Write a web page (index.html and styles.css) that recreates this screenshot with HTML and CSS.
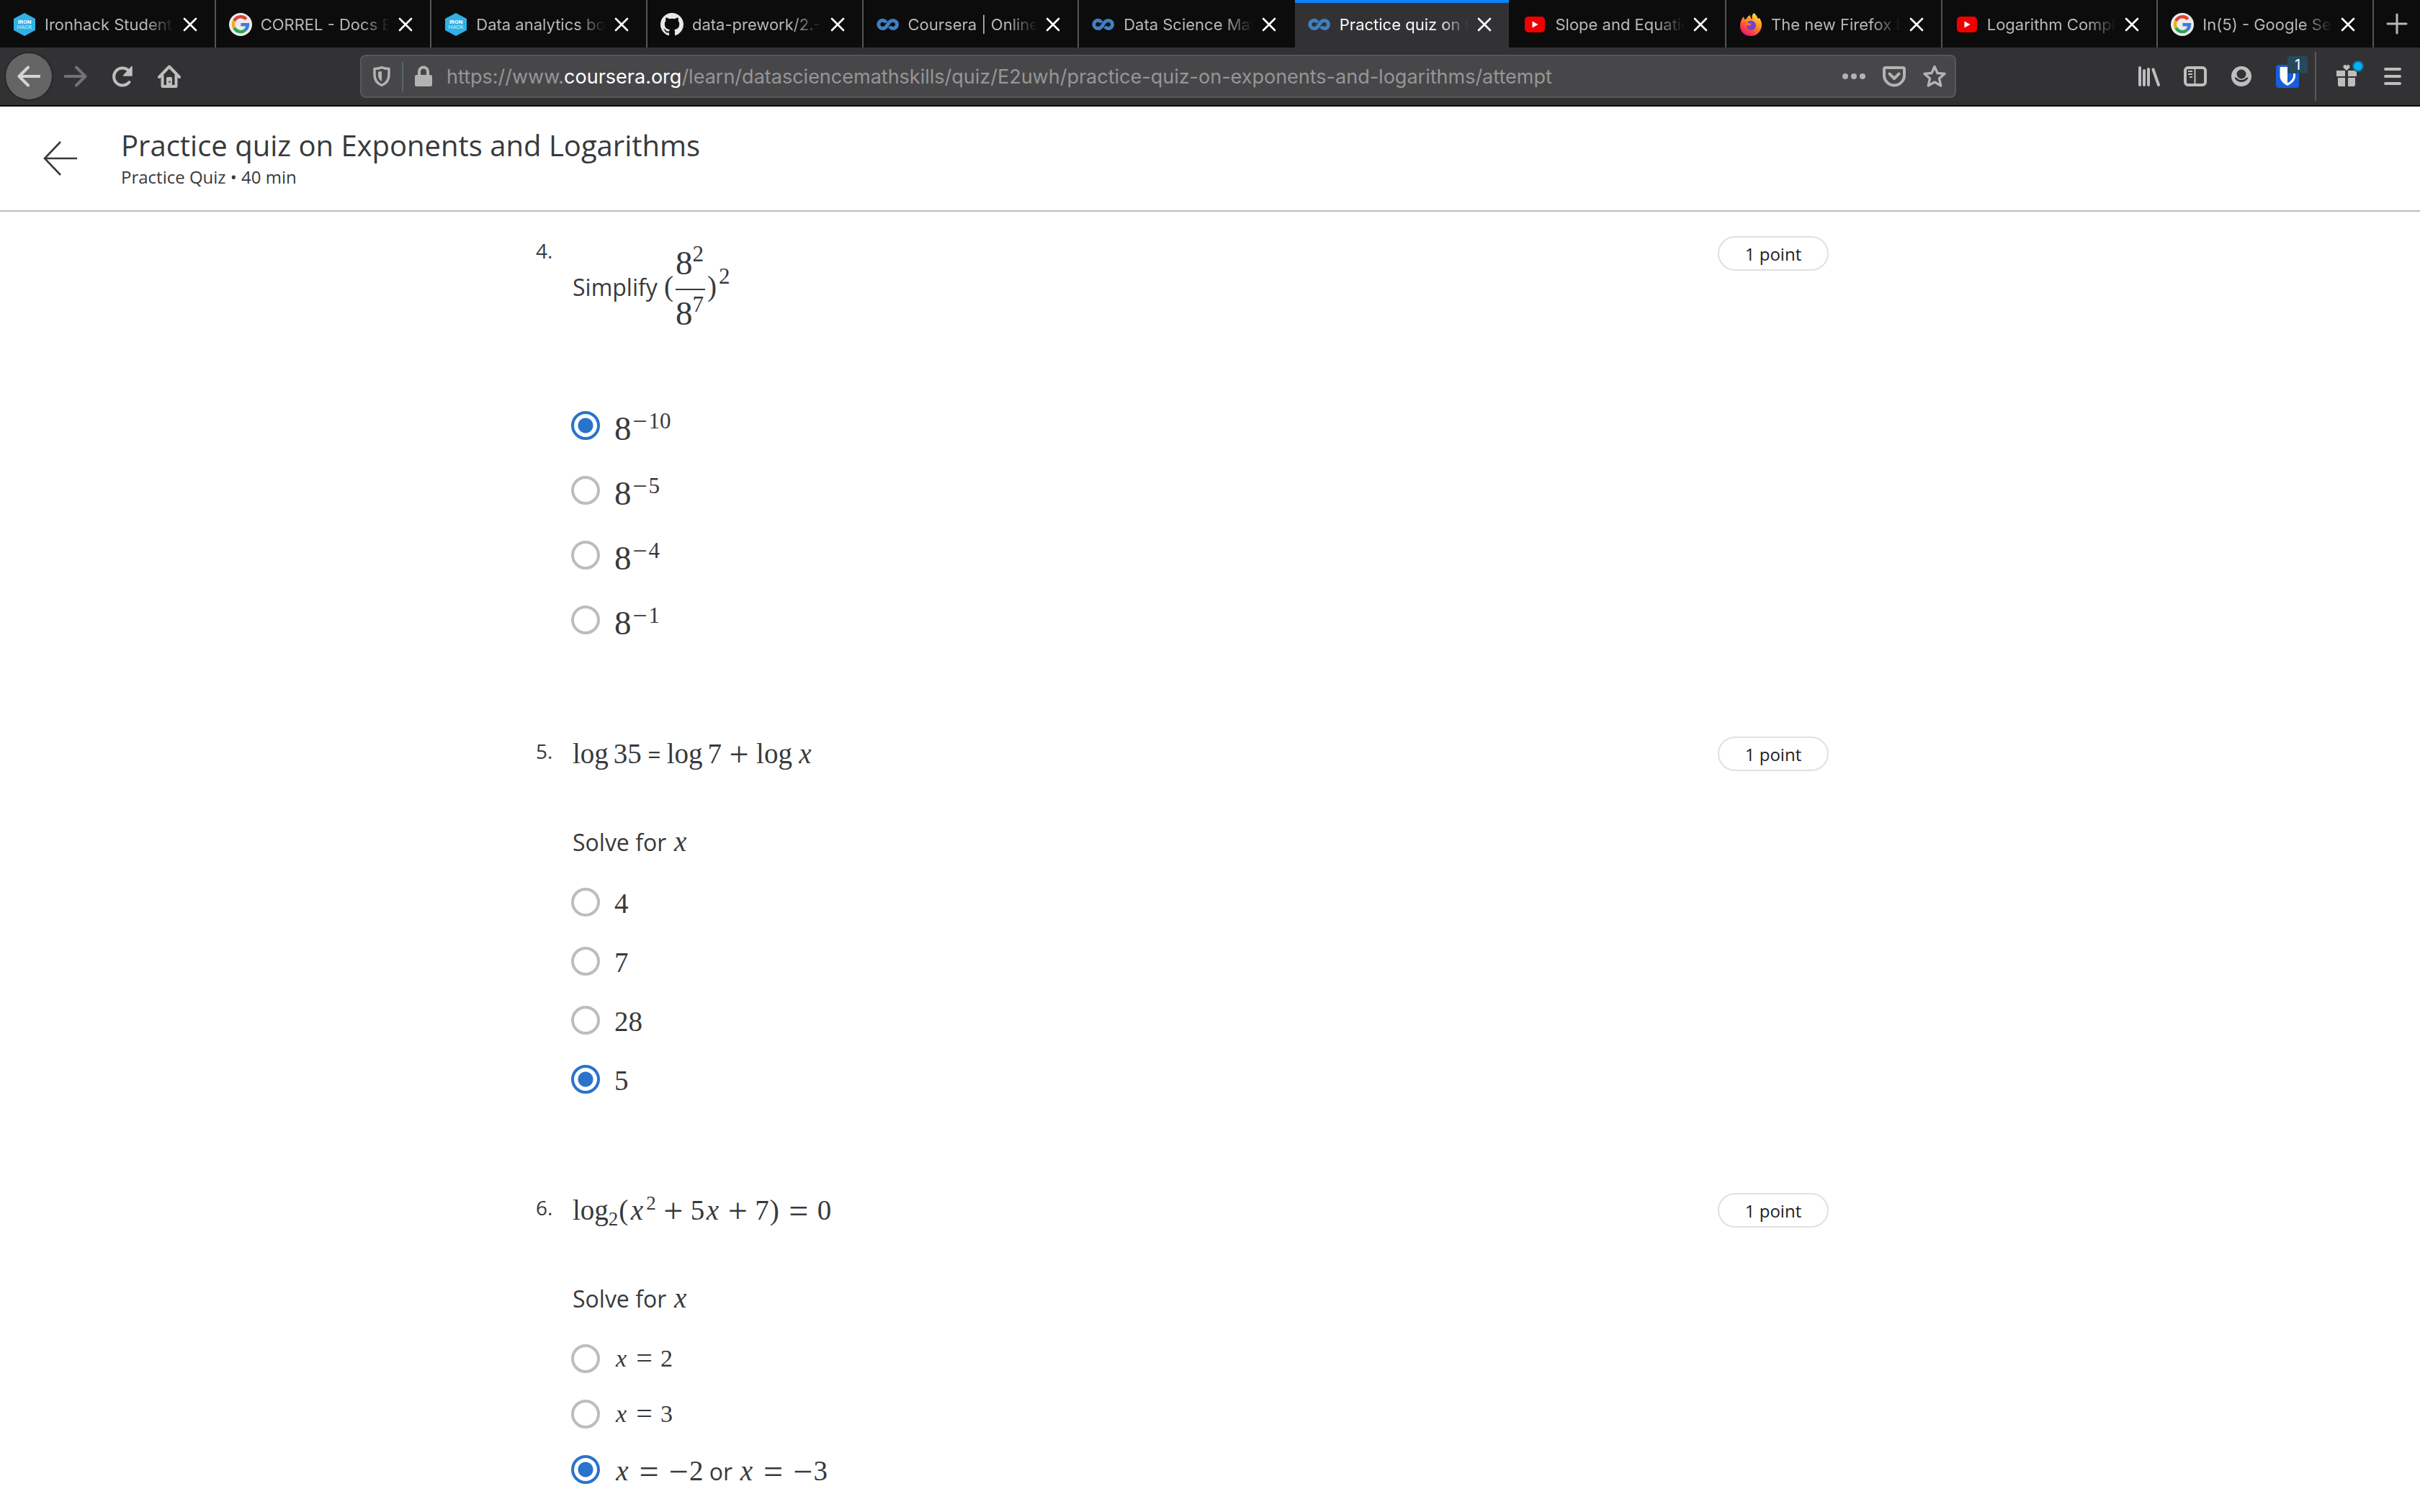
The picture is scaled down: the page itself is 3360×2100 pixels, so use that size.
FILE: index.html
```html
<!DOCTYPE html>
<html lang="en">
<head>
<meta charset="utf-8">
<title>Practice quiz on Exponents and Logarithms</title>
<link rel="stylesheet" href="styles.css">
</head>
<body>
<svg class="defs" aria-hidden="true">
  <symbol id="close" viewBox="0 0 20 20"><path d="M2 2 18 18M18 2 2 18" fill="none" stroke="currentColor" stroke-width="2.6" stroke-linecap="round"/></symbol>
  <symbol id="ironhack" viewBox="0 0 32 32"><path d="M16 0 31 8V24L16 32 1 24V8Z" fill="#2fb1e6"/><text x="16" y="15" text-anchor="middle" font-family="Roboto, sans-serif" font-size="8" font-weight="700" fill="#fff">IRON</text><text x="16" y="22" text-anchor="middle" font-family="Roboto, sans-serif" font-size="8" fill="#d5f0fb">HACK</text></symbol>
  <symbol id="google" viewBox="0 0 32 32"><circle cx="16" cy="16" r="16" fill="#ececec"/><g fill="none" stroke-width="4.4"><path d="M23.8 8.6A10 10 0 0 0 7.2 11.2" stroke="#dc4437"/><path d="M7.2 11.2A10 10 0 0 0 7.2 20.8" stroke="#eab11c"/><path d="M7.2 20.8A10 10 0 0 0 22.6 23.6" stroke="#31a350"/><path d="M22.6 23.6A10 10 0 0 0 26 16.2H16.4" stroke="#4179e0"/></g></symbol>
  <symbol id="github" viewBox="0 0 16 16"><path fill="#e8e8e8" d="M8 0C3.58 0 0 3.58 0 8c0 3.54 2.29 6.53 5.47 7.59.4.07.55-.17.55-.38 0-.19-.01-.82-.01-1.49-2.01.37-2.53-.49-2.69-.94-.09-.23-.48-.94-.82-1.13-.28-.15-.68-.52-.01-.53.63-.01 1.08.58 1.23.82.72 1.21 1.87.87 2.33.66.07-.52.28-.87.51-1.07-1.78-.2-3.64-.89-3.64-3.95 0-.87.31-1.59.82-2.15-.08-.2-.36-1.02.08-2.12 0 0 .67-.21 2.2.82.64-.18 1.32-.27 2-.27s1.36.09 2 .27c1.53-1.04 2.2-.82 2.2-.82.44 1.1.16 1.92.08 2.12.51.56.82 1.27.82 2.15 0 3.07-1.87 3.75-3.65 3.95.29.25.54.73.54 1.48 0 1.07-.01 1.93-.01 2.2 0 .21.15.46.55.38A8.01 8.01 0 0 0 16 8c0-4.42-3.58-8-8-8z"/></symbol>
  <symbol id="coursera" viewBox="0 0 32 32"><path d="M13.300 13.200A5.600 5.600 0 1 0 9 21.500C16 21.500 15 10.500 22.500 10.500A5.500 5.500 0 1 1 18.200 18.800" fill="none" stroke="#3f7fc2" stroke-width="5"/></symbol>
  <symbol id="youtube" viewBox="0 0 32 32"><rect x="2" y="5" width="28" height="22" rx="5" fill="#f00000"/><path d="M12.500 11.500V20.500L20.500 16Z" fill="#fff"/></symbol>
  <symbol id="firefox" viewBox="0 0 32 32">
    <linearGradient id="flame" x1="0.8" y1="0" x2="0.2" y2="1"><stop offset="0" stop-color="#ffe44a"/><stop offset=".45" stop-color="#ff8a1e"/><stop offset=".75" stop-color="#ff3b47"/><stop offset="1" stop-color="#d0157f"/></linearGradient>
    <path d="M20 0C24 3 25 6 26 8L28 7C31 12 32 17 30 22 27 29 22 32 16 32 7 32 1 26 1 18 1 13 3 8 6 5L7 9 10 8C11 5 13 4 15 3 15 5 16 8 18 9 17 6 17 3 20 0Z" fill="url(#flame)"/>
    <path d="M12 12C16 9 23 12 23 17 23 21 20 24 16 24 12 24 10 20 10 17L14 18 17 15 12 14Z" fill="#7542d0"/></symbol>
</svg>

<header class="browser">
  <div class="tabs" role="tablist">
    <div class="tab" role="tab"><svg class="fav"><use href="#ironhack"/></svg><span class="tab-title">Ironhack Student P</span><button class="tab-close" aria-label="Close tab"><svg><use href="#close"/></svg></button></div>
    <div class="tab" role="tab"><svg class="fav"><use href="#google"/></svg><span class="tab-title">CORREL - Docs Editors</span><button class="tab-close" aria-label="Close tab"><svg><use href="#close"/></svg></button></div>
    <div class="tab" role="tab"><svg class="fav"><use href="#ironhack"/></svg><span class="tab-title">Data analytics bootcamp</span><button class="tab-close" aria-label="Close tab"><svg><use href="#close"/></svg></button></div>
    <div class="tab" role="tab"><svg class="fav"><use href="#github"/></svg><span class="tab-title">data-prework/2.-Stat</span><button class="tab-close" aria-label="Close tab"><svg><use href="#close"/></svg></button></div>
    <div class="tab" role="tab"><svg class="fav"><use href="#coursera"/></svg><span class="tab-title">Coursera | Online C</span><button class="tab-close" aria-label="Close tab"><svg><use href="#close"/></svg></button></div>
    <div class="tab tab-before" role="tab"><svg class="fav"><use href="#coursera"/></svg><span class="tab-title">Data Science Math</span><button class="tab-close" aria-label="Close tab"><svg><use href="#close"/></svg></button></div>
    <div class="tab tab-active" role="tab" aria-selected="true"><svg class="fav"><use href="#coursera"/></svg><span class="tab-title">Practice quiz on Exponents</span><button class="tab-close" aria-label="Close tab"><svg><use href="#close"/></svg></button></div>
    <div class="tab" role="tab"><svg class="fav"><use href="#youtube"/></svg><span class="tab-title">Slope and Equation</span><button class="tab-close" aria-label="Close tab"><svg><use href="#close"/></svg></button></div>
    <div class="tab" role="tab"><svg class="fav"><use href="#firefox"/></svg><span class="tab-title">The new Firefox Look</span><button class="tab-close" aria-label="Close tab"><svg><use href="#close"/></svg></button></div>
    <div class="tab" role="tab"><svg class="fav"><use href="#youtube"/></svg><span class="tab-title">Logarithm Complete</span><button class="tab-close" aria-label="Close tab"><svg><use href="#close"/></svg></button></div>
    <div class="tab" role="tab"><svg class="fav"><use href="#google"/></svg><span class="tab-title">In(5) - Google Search</span><button class="tab-close" aria-label="Close tab"><svg><use href="#close"/></svg></button></div>
    <button class="new-tab" aria-label="New tab"><svg viewBox="0 0 32 32"><path d="M16 3V29M3 16H29" stroke="currentColor" stroke-width="3" stroke-linecap="round"/></svg></button>
  </div>

  <nav class="toolbar" aria-label="Browser">
    <div class="nav-buttons">
      <button class="tool tool-back" aria-label="Back"><svg viewBox="0 0 32 32"><path d="M31 16H3M15 3.500 2.500 16 15 28.500" fill="none" stroke="currentColor" stroke-width="4" stroke-linecap="round" stroke-linejoin="round"/></svg></button>
      <button class="tool tool-dim" aria-label="Forward"><svg viewBox="0 0 32 32"><path d="M1 16H29M17 3.500 29.500 16 17 28.500" fill="none" stroke="currentColor" stroke-width="4" stroke-linecap="round" stroke-linejoin="round"/></svg></button>
      <button class="tool" aria-label="Reload"><svg viewBox="0 0 32 32"><path d="M25.500 24A12 12 0 1 1 24.500 8" fill="none" stroke="currentColor" stroke-width="4" stroke-linecap="round"/><path d="M29 2.500V15H17.500Z" fill="currentColor" stroke="currentColor" stroke-width="1.500" stroke-linejoin="round"/></svg></button>
      <button class="tool" aria-label="Home"><svg viewBox="0 0 32 32"><path d="M2 17 16 2.500 30 17M6.500 15V30H25.500V15" fill="none" stroke="currentColor" stroke-width="4" stroke-linejoin="round" stroke-linecap="round"/><path d="M12 30V18.500Q12 17 13.500 17H18.500Q20 17 20 18.500V30Z" fill="currentColor"/><path d="M16.500 22.500V25" stroke="#323234" stroke-width="2"/></svg></button>
    </div>
    <div class="urlbar">
      <button class="url-icon" aria-label="Tracking protection"><svg viewBox="0 0 32 32"><path d="M16 3.500C12 5.500 9 5.500 6 5.500V14C6 21 10 26 16 28.500 22 26 26 21 26 14V5.500C23 5.500 20 5.500 16 3.500Z" fill="none" stroke="currentColor" stroke-width="3.500" stroke-linejoin="round"/><path d="M16 9V23C12.500 21 11 18 11 14V9.500Z" fill="currentColor"/></svg></button>
      <span class="url-rule"></span>
      <button class="url-icon url-lock" aria-label="Site security"><svg viewBox="0 0 32 32"><path d="M10 15V9.500A6 6 0 0 1 22 9.500V15" fill="none" stroke="currentColor" stroke-width="4"/><rect x="4" y="14" width="24" height="16" rx="2.500" fill="currentColor"/></svg></button>
      <div class="url" role="textbox" aria-label="Address" contenteditable="true" spellcheck="false">https://www.<b>coursera.org</b>/learn/datasciencemathskills/quiz/E2uwh/practice-quiz-on-exponents-and-logarithms/attempt</div>
      <div class="url-actions">
        <button class="url-icon" aria-label="Page actions"><svg viewBox="0 0 32 32"><g fill="currentColor"><circle cx="4" cy="16" r="4"/><circle cx="16" cy="16" r="4"/><circle cx="28" cy="16" r="4"/></g></svg></button>
        <button class="url-icon" aria-label="Save to Pocket"><svg viewBox="0 0 32 32"><path d="M4 4H28Q30 4 30 6V14.500A14 14 0 0 1 2 14.500V6Q2 4 4 4Z" fill="none" stroke="currentColor" stroke-width="4"/><path d="M9.500 12.500 16 19 22.500 12.500" fill="none" stroke="currentColor" stroke-width="4" stroke-linecap="round" stroke-linejoin="round"/></svg></button>
        <button class="url-icon" aria-label="Bookmark"><svg viewBox="0 0 32 32"><path d="M16 2.500 20 11.500 30 12.500 22.500 19 24.700 29 16 24 7.300 29 9.500 19 2 12.500 12 11.500Z" fill="none" stroke="currentColor" stroke-width="3.400" stroke-linejoin="round"/></svg></button>
      </div>
    </div>
    <div class="extras">
      <button class="tool" aria-label="Library"><svg viewBox="0 0 32 32"><path d="M3 4V28M9 8V28M15 6V28M21.500 6.500 29 28" fill="none" stroke="currentColor" stroke-width="4" stroke-linecap="round"/></svg></button>
      <button class="tool" aria-label="Sidebars"><svg viewBox="0 0 32 32"><rect x="2" y="4" width="28" height="24" rx="4" fill="none" stroke="currentColor" stroke-width="4"/><path d="M15.500 5V28" stroke="currentColor" stroke-width="2"/><path d="M6 9H12M6 13H12M8 17H12" stroke="currentColor" stroke-width="2"/></svg></button>
      <button class="tool" aria-label="Account"><svg viewBox="0 0 32 32"><circle cx="16" cy="16" r="14" fill="currentColor"/><circle cx="16" cy="13" r="6.500" fill="#323234"/><path d="M6.500 17.500Q9 17 11 19.500 16 22.500 21 19.500 23 17 25.500 17.500C23 26 9 26 6.500 17.500Z" fill="#323234"/></svg></button>
      <button class="tool" aria-label="Bitwarden"><svg viewBox="0 0 32 32"><rect width="32" height="32" rx="4" fill="#175ddc"/><path d="M5.500 3H27V15C27 22 22 26 16 29 10 26 5.500 22 5.500 15Z" fill="#fff"/><path d="M16 6H24V15C24 19.500 20.500 23 16 25.500Z" fill="#175ddc"/></svg><span class="badge">1</span></button>
      <span class="tool-rule"></span>
      <button class="tool" aria-label="What's new"><svg viewBox="0 0 32 32"><path d="M2 8H14V16H2ZM18 8H30V16H18ZM4 18H14V30H6Q4 30 4 28ZM18 18H28V28Q28 30 26 30H18Z" fill="currentColor"/><path d="M16 8 11.500 4Q11 0 14 0 16 0 16 2 16 0 18 0 21 0 20.500 4Z" fill="currentColor"/></svg><span class="dot"></span></button>
      <button class="tool" aria-label="Menu"><svg viewBox="0 0 32 32"><path d="M6 6H26M6 16H26M6 26H26" stroke="currentColor" stroke-width="4" stroke-linecap="round"/></svg></button>
    </div>
  </nav>
</header>

<div class="quiz-header">
  <a class="back" href="#" aria-label="Back"><svg viewBox="0 0 48 48"><path d="M47 24H2M24 1 2 24 24 47" fill="none" stroke="currentColor" stroke-width="2.600"/></svg></a>
  <div>
    <h1>Practice quiz on Exponents and Logarithms</h1>
    <p class="subtitle">Practice Quiz • 40 min</p>
  </div>
</div>

<main class="quiz">
  <section class="question">
    <span class="number">4.</span>
    <div class="body">
      <div class="prompt prompt-tall">Simplify <span class="math"><span class="paren">(</span><span class="frac"><span class="num">8<sup>2</sup></span><span class="den">8<sup>7</sup></span></span><span class="paren">)</span><sup class="large">2</sup></span></div>
      <div class="options options-power" role="radiogroup">
        <label><input type="radio" name="q4" checked><span class="math">8<sup><span class="op">−</span>10</sup></span></label>
        <label><input type="radio" name="q4"><span class="math">8<sup><span class="op">−</span>5</sup></span></label>
        <label><input type="radio" name="q4"><span class="math">8<sup><span class="op">−</span>4</sup></span></label>
        <label><input type="radio" name="q4"><span class="math">8<sup><span class="op">−</span>1</sup></span></label>
      </div>
    </div>
    <button class="points">1 point</button>
  </section>

  <section class="question">
    <span class="number">5.</span>
    <div class="body">
      <div class="prompt"><span class="math"><span class="fn">log</span>35</span> = <span class="math"><span class="fn">log</span>7<span class="op bin">+</span><span class="fn">log</span><i>x</i></span></div>
      <div class="prompt">Solve for <span class="math"><i>x</i></span></div>
      <div class="options options-number" role="radiogroup">
        <label><input type="radio" name="q5"><span class="math">4</span></label>
        <label><input type="radio" name="q5"><span class="math">7</span></label>
        <label><input type="radio" name="q5"><span class="math">28</span></label>
        <label><input type="radio" name="q5" checked><span class="math">5</span></label>
      </div>
    </div>
    <button class="points">1 point</button>
  </section>

  <section class="question">
    <span class="number">6.</span>
    <div class="body">
      <div class="prompt"><span class="math">log<sub>2</sub><span class="paren">(</span><i>x</i><sup>2</sup><span class="op bin">+</span>5<i>x</i><span class="op bin">+</span>7<span class="paren">)</span><span class="op rel">=</span>0</span></div>
      <div class="prompt">Solve for <span class="math"><i>x</i></span></div>
      <div class="options options-equation" role="radiogroup">
        <label><input type="radio" name="q6"><span class="math small"><i>x</i><span class="op rel">=</span>2</span></label>
        <label><input type="radio" name="q6"><span class="math small"><i>x</i><span class="op rel">=</span>3</span></label>
        <label class="wide"><input type="radio" name="q6" checked><span><span class="math"><i>x</i><span class="op rel">=</span><span class="op neg">−</span>2</span> or <span class="math"><i>x</i><span class="op rel">=</span><span class="op neg">−</span>3</span></span></label>
      </div>
    </div>
    <button class="points">1 point</button>
  </section>
</main>
</body>
</html>
```
FILE: styles.css
```css
* { box-sizing: border-box; }

body {
  margin: 0;
  background: #fff;
  color: #373a3c;
  font-family: "Open Sans", sans-serif;
}

button {
  padding: 0;
  border: 0;
  background: none;
  color: inherit;
  font: inherit;
}

svg { display: block; }
.defs { position: absolute; width: 0; height: 0; }

/* Browser chrome */
.browser {
  font-family: Inter, sans-serif;
  background: #323234;
  border-bottom: 2px solid #0c0c0d;
}

.tabs {
  display: grid;
  grid-template-columns: repeat(11, minmax(0, 1fr)) 64px;
  height: 66px;
  background: #0c0c0d;
  color: #b8b8b9;
}

.tab {
  display: flex;
  align-items: center;
  gap: 12px;
  padding: 2px 24px 0 18px;
  border-right: 2px solid #545455;
}

.tab-before { border-right-color: #0c0c0d; }

.tab-active {
  background: #323234;
  border-right-color: #0c0c0d;
  box-shadow: inset 0 4px #0a84ff;
  color: #f9f9fa;
}

.fav { flex: none; width: 32px; height: 32px; }

.tab-title {
  flex: 1;
  min-width: 0;
  overflow: hidden;
  font-size: 22px;
  line-height: 32px;
  white-space: nowrap;
  mask-image: linear-gradient(to left, transparent, #000 40px);
}

.tab-close { flex: none; width: 20px; color: #fff; }
.tab-close svg { width: 20px; height: 20px; }

.new-tab { display: grid; place-items: center; }
.new-tab svg { width: 32px; height: 32px; }

.toolbar {
  display: flex;
  align-items: center;
  height: 80px;
  padding: 0 6px 0 8px;
  color: #bebebf;
}

.nav-buttons, .extras { display: flex; align-items: center; }
.nav-buttons { gap: 1px; }

.tool {
  position: relative;
  display: grid;
  place-items: center;
  width: 64px;
  height: 64px;
}

.tool svg { width: 32px; height: 32px; }

.tool-back {
  border-radius: 50%;
  background: #656566;
  box-shadow: 0 0 0 2px #28282a;
  color: #d4d4d5;
}

.tool-dim { color: #737374; }

.urlbar {
  flex: 1;
  display: flex;
  align-items: center;
  height: 60px;
  margin: 0 236px 0 233px;
  padding: 0 12px;
  border: 2px solid #58585a;
  border-radius: 8px;
  background: #474749;
  color: #b3b3b4;
}

.url-icon svg { width: 32px; height: 32px; }
.url-rule { width: 2px; height: 42px; margin: 0 12px; background: #5b6370; }
.url-lock { margin-right: 16px; }

.url {
  flex: 1;
  padding-top: 2px;
  font-size: 27px;
  line-height: 40px;
  white-space: nowrap;
  color: #969697;
}

.url b { font-weight: 400; color: #fff; }
.url-actions { display: flex; gap: 24px; }

.tool-rule {
  width: 2px;
  height: 68px;
  margin: 0 10px 0 6px;
  background: #5a5a5c;
}

.badge {
  position: absolute;
  top: 4px;
  right: 4px;
  width: 28px;
  height: 24px;
  border-radius: 3px;
  background: #26495c;
  color: #fff;
  font-size: 20px;
  line-height: 24px;
  text-align: center;
}

.dot {
  position: absolute;
  top: 10px;
  right: 8px;
  width: 16px;
  height: 16px;
  border: 2px solid #12678c;
  border-radius: 50%;
  background: #00b3f4;
}

/* Quiz header */
.quiz-header {
  display: flex;
  align-items: center;
  gap: 60px;
  padding: 30px 60px;
  border-bottom: 2px solid #bdbdbd;
}

.back { color: #373a3c; }
.back svg { width: 48px; height: 48px; }

h1 {
  margin: 0 0 4px;
  font-size: 40px;
  font-weight: 400;
  line-height: 48px;
}

.subtitle { margin: 0; font-size: 24px; line-height: 32px; }

/* Questions */
.quiz {
  display: flex;
  flex-direction: column;
  gap: 134px;
  max-width: 1920px;
  margin: 0 auto;
  padding: 34px 101px 34px 24px;
}

.question {
  display: grid;
  grid-template-columns: 51px 1fr auto;
  align-items: start;
}

.number { font-size: 28px; line-height: 40px; }

.prompt {
  margin-bottom: 72px;
  font-size: 32px;
  line-height: 50px;
}

.prompt:nth-last-child(2) { margin-bottom: 38px; }
.prompt-tall { padding: 14px 0 71px; }

.points {
  width: 154px;
  height: 48px;
  border: 2px solid #e0e0e0;
  border-radius: 24px;
  font-size: 24px;
  line-height: 32px;
  padding-top: 2px;
  color: #1f1f1f;
}

.options { display: flex; flex-direction: column; }

.options label {
  display: flex;
  align-items: flex-start;
  gap: 20px;
  font-size: 32px;
}

.options input {
  appearance: none;
  flex: none;
  width: 40px;
  height: 40px;
  margin: 0 0 0 -2px;
  border: 4px solid #bdbdbd;
  border-radius: 50%;
}

.options input:checked {
  border-color: #2a73cc;
  background: radial-gradient(circle, #2a73cc 10px, transparent 11px);
}

.options-power { gap: 42px; line-height: 48px; }
.options-number { gap: 38px; line-height: 44px; }
.options-equation { gap: 37px; line-height: 40px; }
.options-equation .wide { line-height: 44px; }

/* Formulas */
.math {
  font-family: "Liberation Serif", serif;
  font-size: 39px;
}

.prompt .math { line-height: 0; }
.math.small { font-size: 34px; }
.options-power .math { font-size: 47px; }

.math i { display: inline-block; width: 22px; text-align: center; }
.math.small i { width: 19px; }
.fn { margin-right: 7px; }
.paren { display: inline-block; width: 15px; text-align: center; }

.op {
  display: inline-block;
  font-size: 48px;
  line-height: 0;
  text-align: center;
  vertical-align: -4px;
}

.bin { width: 48px; }
.rel { width: 52px; }
.neg { width: 30px; }
.small .op { width: 45px; font-size: 40px; vertical-align: -2px; }

.math sup, .math sub { font-size: 27px; line-height: 0; }
.math sup { margin-left: 2px; vertical-align: 14px; }
.math sub { vertical-align: -8px; }
.math sup.large { font-size: 31px; vertical-align: 17px; }

.options-power .math sup { margin-left: 0; font-size: 31px; vertical-align: 16px; }
.options-power .op { width: 24px; font-size: 36px; vertical-align: -2px; }

.frac {
  display: inline-block;
  width: 41px;
  margin: 0 2px;
  font-size: 47px;
  line-height: 46px;
  vertical-align: middle;
}

.num, .den { display: block; }
.num { padding-bottom: 13px; border-bottom: 2px solid #373a3c; }
.den { padding: 9px 0 4px; }
.math .frac sup { margin-left: 0; font-size: 31px; vertical-align: 18px; }
```
